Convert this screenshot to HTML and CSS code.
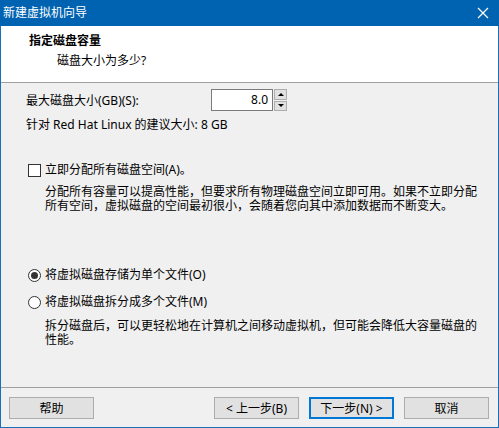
FILE: index.html
```html
<!DOCTYPE html>
<html lang="zh-CN">
<head>
<meta charset="utf-8"/>
<title>新建虚拟机向导</title>
<link rel="stylesheet" href="styles.css">
</head>
<body>
<div class="window">
  <div class="titlebar">
    <span class="title">新建虚拟机向导</span>
    <svg class="close" width="12" height="12" viewBox="0 0 12 12">
      <path d="M1 1 L11 11 M11 1 L1 11" stroke="#fff" stroke-width="1.2" fill="none"/>
    </svg>
  </div>
  <div class="header">
    <div class="heading">指定磁盘容量</div>
    <div class="subheading">磁盘大小为多少?</div>
  </div>
  <div class="content">
    <div class="size-row">
      <span class="size-label">最大磁盘大小(GB)(S):</span>
      <div class="spin">
        <div class="spin-value">8.0</div>
        <div class="spin-buttons">
          <div class="spin-btn"><span class="arrow-up"></span></div>
          <div class="spin-btn"><span class="arrow-down"></span></div>
        </div>
      </div>
    </div>
    <div class="hint">针对 Red Hat Linux 的建议大小: 8 GB</div>

    <div class="option first-option">
      <span class="checkbox"></span>
      <span>立即分配所有磁盘空间(A)。</span>
    </div>
    <p class="note">分配所有容量可以提高性能，但要求所有物理磁盘空间立即可用。如果不立即分配所有空间，虚拟磁盘的空间最初很小，会随着您向其中添加数据而不断变大。</p>

    <div class="option radio-one">
      <span class="radio checked"></span>
      <span>将虚拟磁盘存储为单个文件(O)</span>
    </div>
    <div class="option radio-two">
      <span class="radio"></span>
      <span>将虚拟磁盘拆分成多个文件(M)</span>
    </div>
    <p class="note note-split">拆分磁盘后，可以更轻松地在计算机之间移动虚拟机，但可能会降低大容量磁盘的性能。</p>
  </div>
  <div class="footer">
    <button class="btn">帮助</button>
    <div class="nav">
      <button class="btn">&lt; 上一步(B)</button>
      <button class="btn default">下一步(N) &gt;</button>
      <button class="btn">取消</button>
    </div>
  </div>
</div>
</body>
</html>
```

FILE: styles.css
```css
* {
    box-sizing: border-box;
    margin: 0;
    padding: 0;
}
body {
    font-family: "Noto Sans", "Noto Sans CJK SC", sans-serif;
    font-size: 12px;
    color: #000;
    background: #fff;
}
.window {
    width: 499px;
    height: 428px;
    display: flex;
    flex-direction: column;
    background: #f0f0f0;
    border: 1px solid #1a6fb8;
    border-top: none;
}
.titlebar {
    height: 26px;
    background: #0063b1;
    color: #fff;
    display: flex;
    align-items: center;
    justify-content: space-between;
    padding: 0 10px 0 3px;
    margin: 0 -1px;
    line-height: 16px;
}
.close {
    display: block;
}
.header {
    height: 57px;
    background: #fff;
    border-bottom: 1px solid #a0a0a0;
    padding: 7px 0 0 28px;
    line-height: 16px;
}
.heading {
    font-weight: bold;
}
.subheading {
    margin-top: 4px;
    padding-left: 28px;
}
.content {
    flex: 1;
    padding: 6px 0 0 25px;
}
.size-row {
    display: flex;
    align-items: center;
    height: 22px;
}
.size-label {
    width: 185px;
}
.spin {
    display: flex;
    height: 22px;
}
.spin-value {
    width: 62px;
    background: #fff;
    border: 1px solid #7a7a7a;
    text-align: right;
    padding-right: 4px;
    line-height: 20px;
}
.spin-buttons {
    width: 14px;
    display: flex;
    flex-direction: column;
    gap: 1px;
    padding: 0 0 0 1px;
}
.spin-btn {
    flex: 1;
    background: #e1e1e1;
    border: 1px solid #adadad;
    display: flex;
    align-items: center;
    justify-content: center;
}
.arrow-up {
    border-left: 3px solid transparent;
    border-right: 3px solid transparent;
    border-bottom: 3px solid #000;
}
.arrow-down {
    border-left: 3px solid transparent;
    border-right: 3px solid transparent;
    border-top: 3px solid #000;
}
.hint {
    margin-top: 6px;
    line-height: 16px;
}
.option {
    display: flex;
    align-items: center;
    gap: 4px;
    line-height: 16px;
    padding-left: 2px;
}
.first-option {
    margin-top: 29px;
}
.radio-one {
    margin-top: 54px;
}
.radio-two {
    margin-top: 11px;
}
.checkbox {
    width: 13px;
    height: 13px;
    background: #fff;
    border: 1px solid #333;
}
.radio {
    width: 13px;
    height: 13px;
    border-radius: 50%;
    background: #fff;
    border: 1px solid #333;
    display: flex;
    align-items: center;
    justify-content: center;
}
.radio.checked::after {
    content: "";
    width: 7px;
    height: 7px;
    border-radius: 50%;
    background: #333;
}
.note {
    margin-top: 7px;
    padding: 0 18px 0 19px;
    line-height: 14px;
}
.note-split {
    margin-top: 9px;
}
.footer {
    height: 40px;
    border-top: 1px solid #a0a0a0;
    display: flex;
    justify-content: space-between;
    padding: 9px 9px 0 8px;
}
.nav {
    display: flex;
    gap: 10px;
}
.btn {
    width: 85px;
    height: 22px;
    background: #e1e1e1;
    border: 1px solid #adadad;
    font-family: inherit;
    font-size: 12px;
    color: #000;
}
.btn.default {
    border-color: #0078d7;
    box-shadow: inset 0 0 0 1px #0078d7;
}
```
